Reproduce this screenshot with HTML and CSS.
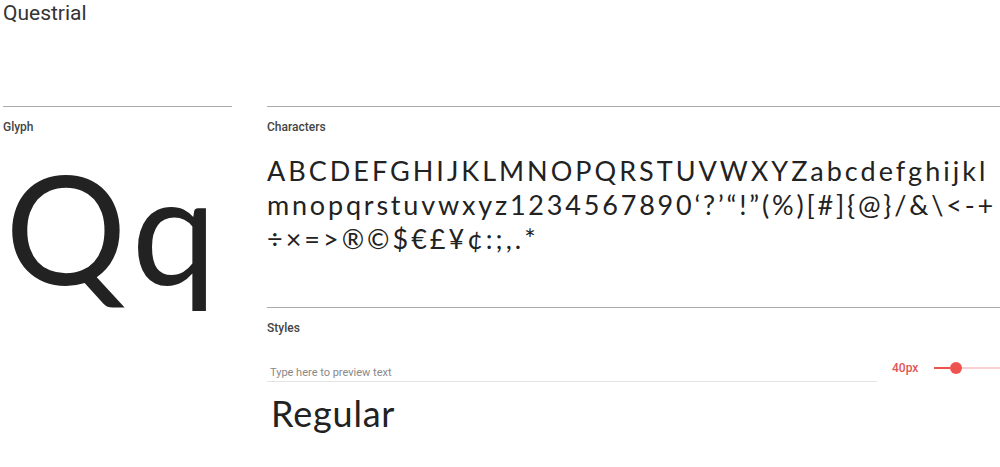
FILE: index.html
```html
<!DOCTYPE html>
<html>
<head>
<meta charset="utf-8">
<link rel="stylesheet" href="styles.css">
</head>
<body>
<div class="page">
  <h1 class="title">Questrial</h1>
  <div class="columns">
    <section class="col col-left">
      <h2 class="label">Glyph</h2>
      <div class="glyph">Qq</div>
    </section>
    <div class="col col-right">
      <section class="chars-section">
        <h2 class="label">Characters</h2>
        <div class="chars">
          <div class="chars-line">ABCDEFGHIJKLMNOPQRSTUVWXYZabcdefghijkl</div>
          <div class="chars-line">mnopqrstuvwxyz1234567890‘?’“!”(%)[#]{@}/&amp;\&lt;-+</div>
          <div class="chars-line">÷×=&gt;®©$€£¥¢:;,.*</div>
        </div>
      </section>
      <section class="styles-section">
        <h2 class="label">Styles</h2>
        <div class="controls">
          <div class="preview-input">Type here to preview text</div>
          <div class="size-value">40px</div>
          <div class="slider">
            <div class="slider-fill"></div>
            <div class="slider-thumb"></div>
            <div class="slider-rest"></div>
          </div>
        </div>
        <div class="style-sample">Regular</div>
      </section>
    </div>
  </div>
</div>
</body>
</html>
```
FILE: styles.css
```css
html, body {
  margin: 0;
  padding: 0;
  background: #ffffff;
}
body {
  width: 1000px;
  height: 467px;
  overflow: hidden;
  font-family: Roboto, "Liberation Sans", sans-serif;
  color: #222;
}
.page {
  padding: 0 0 0 3px;
}
.title {
  margin: 0;
  padding-top: 1px;
  font-size: 21px;
  line-height: 24px;
  font-weight: 400;
  color: #333;
  height: 105px;
}
.columns {
  display: flex;
  gap: 35px;
}
.col-left {
  flex: 0 0 229px;
  border-top: 1px solid #aaa;
  padding-top: 13px;
}
.col-right {
  flex: 1;
  min-width: 0;
}
.chars-section {
  border-top: 1px solid #aaa;
  padding-top: 13px;
  height: 187px;
}
.styles-section {
  border-top: 1px solid #aaa;
  padding-top: 13px;
}
.label {
  margin: 0;
  font-size: 12px;
  line-height: 14px;
  font-weight: 500;
  color: #444;
}
.glyph {
  font-family: Lato, sans-serif;
  font-size: 152px;
  line-height: 180px;
  margin-top: 2px;
  padding-left: 2px;
  color: #222;
  letter-spacing: 6px;
}
.chars {
  margin-top: 20px;
  font-family: Lato, sans-serif;
  font-size: 27px;
  line-height: 34px;
  letter-spacing: 3px;
  color: #222;
  white-space: nowrap;
}
.chars-line:nth-child(2) {
  letter-spacing: 2.8px;
}
.controls {
  display: flex;
  align-items: center;
  margin-top: 26px;
}
.preview-input {
  width: 607px;
  padding-left: 3px;
  font-size: 11px;
  line-height: 14px;
  color: #888;
  border-bottom: 1px solid #e4e4e4;
  padding-bottom: 1px;
  padding-top: 5px;
}
.size-value {
  margin-left: 15px;
  width: 26px;
  font-size: 12px;
  font-weight: 500;
  color: #e05555;
  margin-top: -8px;
}
.slider {
  margin-left: 16px;
  flex: 1;
  display: flex;
  align-items: center;
  margin-top: -8px;
}
.slider-fill {
  width: 16px;
  height: 2px;
  background: #ef5350;
}
.slider-thumb {
  width: 12px;
  height: 12px;
  border-radius: 50%;
  background: #ef5350;
}
.slider-rest {
  flex: 1;
  height: 2px;
  background: #f8d0d0;
}
.style-sample {
  margin-top: 9px;
  padding-left: 4px;
  font-family: Lato, sans-serif;
  font-size: 36px;
  line-height: 44px;
  letter-spacing: 0.8px;
  color: #222;
}
```
